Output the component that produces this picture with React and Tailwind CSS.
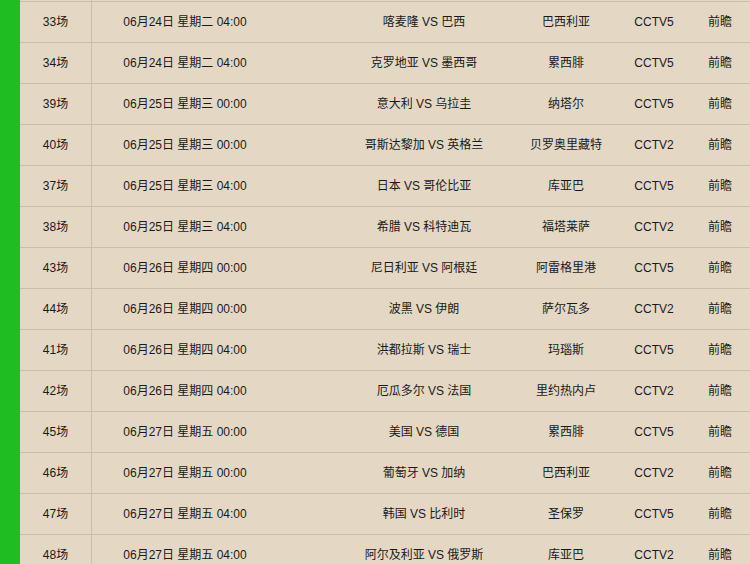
import React from "react";

const rows = [
  ["33场", "06月24日 星期二 04:00", "喀麦隆 VS 巴西", "巴西利亚", "CCTV5"],
  ["34场", "06月24日 星期二 04:00", "克罗地亚 VS 墨西哥", "累西腓", "CCTV5"],
  ["39场", "06月25日 星期三 00:00", "意大利 VS 乌拉圭", "纳塔尔", "CCTV5"],
  ["40场", "06月25日 星期三 00:00", "哥斯达黎加 VS 英格兰", "贝罗奥里藏特", "CCTV2"],
  ["37场", "06月25日 星期三 04:00", "日本 VS 哥伦比亚", "库亚巴", "CCTV5"],
  ["38场", "06月25日 星期三 04:00", "希腊 VS 科特迪瓦", "福塔莱萨", "CCTV2"],
  ["43场", "06月26日 星期四 00:00", "尼日利亚 VS 阿根廷", "阿雷格里港", "CCTV5"],
  ["44场", "06月26日 星期四 00:00", "波黑 VS 伊朗", "萨尔瓦多", "CCTV2"],
  ["41场", "06月26日 星期四 04:00", "洪都拉斯 VS 瑞士", "玛瑙斯", "CCTV5"],
  ["42场", "06月26日 星期四 04:00", "厄瓜多尔 VS 法国", "里约热内卢", "CCTV2"],
  ["45场", "06月27日 星期五 00:00", "美国 VS 德国", "累西腓", "CCTV5"],
  ["46场", "06月27日 星期五 00:00", "葡萄牙 VS 加纳", "巴西利亚", "CCTV2"],
  ["47场", "06月27日 星期五 04:00", "韩国 VS 比利时", "圣保罗", "CCTV5"],
  ["48场", "06月27日 星期五 04:00", "阿尔及利亚 VS 俄罗斯", "库亚巴", "CCTV2"],
];

export default function App() {
  return (
    <div
      className="flex h-[564px] w-[750px] overflow-hidden bg-[#e4d8c4] text-[12px] text-[#1a1a1a]"
      style={{ fontFamily: '"Liberation Sans", "Noto Sans CJK SC", sans-serif' }}
    >
      <div className="w-[20px] shrink-0 bg-[#1fbd22]" />
      <div className="flex-1">
        <div className="grid h-[1px] grid-cols-[72px_1fr]">
          <div className="border-r border-[#c9bdab]" />
          <div />
        </div>
        {rows.map((r) => (
          <div
            key={r[0]}
            className="grid h-[41px] grid-cols-[72px_186px_52px_188px_96px_80px_52px] items-stretch border-t border-[#c9bdab]"
          >
            <div className="flex items-center justify-center border-r border-[#c9bdab]">{r[0]}</div>
            <div className="flex items-center justify-center whitespace-nowrap">{r[1]}</div>
            <div />
            <div className="flex items-center justify-center whitespace-nowrap">{r[2]}</div>
            <div className="flex items-center justify-center whitespace-nowrap">{r[3]}</div>
            <div className="flex items-center justify-center">{r[4]}</div>
            <div className="flex items-center justify-center">前瞻</div>
          </div>
        ))}
      </div>
    </div>
  );
}
